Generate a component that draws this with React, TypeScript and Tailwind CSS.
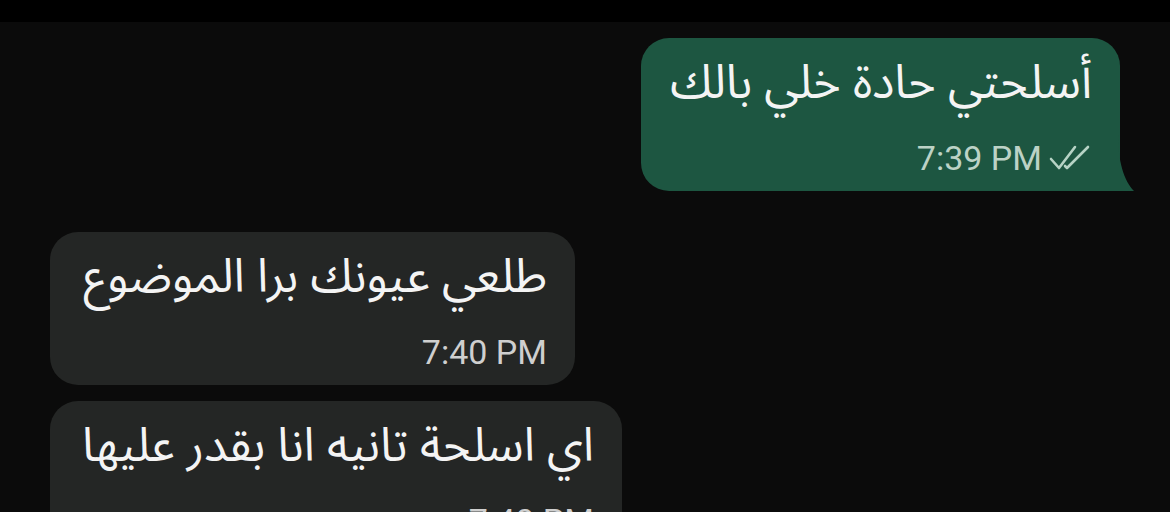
import React from 'react';

const arabic = { fontFamily: '"Noto Sans Arabic", "DejaVu Sans", sans-serif' };
const time = { fontFamily: 'Roboto, "Liberation Sans", sans-serif' };

const DoubleTick = () => (
  <svg width="44" height="28" viewBox="0 0 44 28" fill="none" stroke="#b7d3c5" strokeWidth="2.6" strokeLinecap="round" strokeLinejoin="round">
    <path d="M3 15 L11 24 L27 3" />
    <path d="M17 22 L19 24 L40 3" />
  </svg>
);

const Bubble = ({
  text,
  stamp,
  mine,
  width,
}: {
  text: string;
  stamp: string;
  mine?: boolean;
  width: string;
}) => (
  <div
    className={`relative rounded-[28px] pt-[21px] pb-[13px] pl-[30px] pr-[28px] ${width} ${
      mine ? 'bg-[#1d5641] rounded-br-[6px]' : 'bg-[#242625]'
    }`}
  >
    <div dir="rtl" className="h-[48px] text-[47px] leading-[48px] text-[#f4f4f4] whitespace-nowrap" style={arabic}>
      {text}
    </div>
    <div className="mt-[31px] h-[40px] flex items-center justify-end gap-[6px]">
      <span className={`text-[34px] ${mine ? 'text-[#bcd2c6]' : 'text-[#cfcfcf]'}`} style={time}>
        {stamp}
      </span>
      {mine && <DoubleTick />}
    </div>
    {mine && (
      <svg className="absolute right-[-18px] bottom-0" width="44" height="56" viewBox="0 0 44 56">
        <path d="M0 0 L24 0 C 24 26, 30 46, 40 56 L0 56 Z" fill="#1d5641" />
      </svg>
    )}
  </div>
);

export default function App() {
  return (
    <div className="w-[1170px] h-[512px] overflow-hidden bg-[#0b0b0b]">
      <div className="h-[22px] bg-black" />
      <div className="flex flex-col pt-[16px] px-[50px]">
        <div className="flex justify-end">
          <Bubble mine width="w-[479px]" text="أسلحتي حادة خلي بالك" stamp="7:39 PM" />
        </div>
        <div className="mt-[41px] flex flex-col gap-[16px] items-start">
          <Bubble width="w-[525px]" text="طلعي عيونك برا الموضوع" stamp="7:40 PM" />
          <Bubble width="w-[572px]" text="اي اسلحة تانيه انا بقدر عليها" stamp="7:40 PM" />
        </div>
      </div>
    </div>
  );
}
